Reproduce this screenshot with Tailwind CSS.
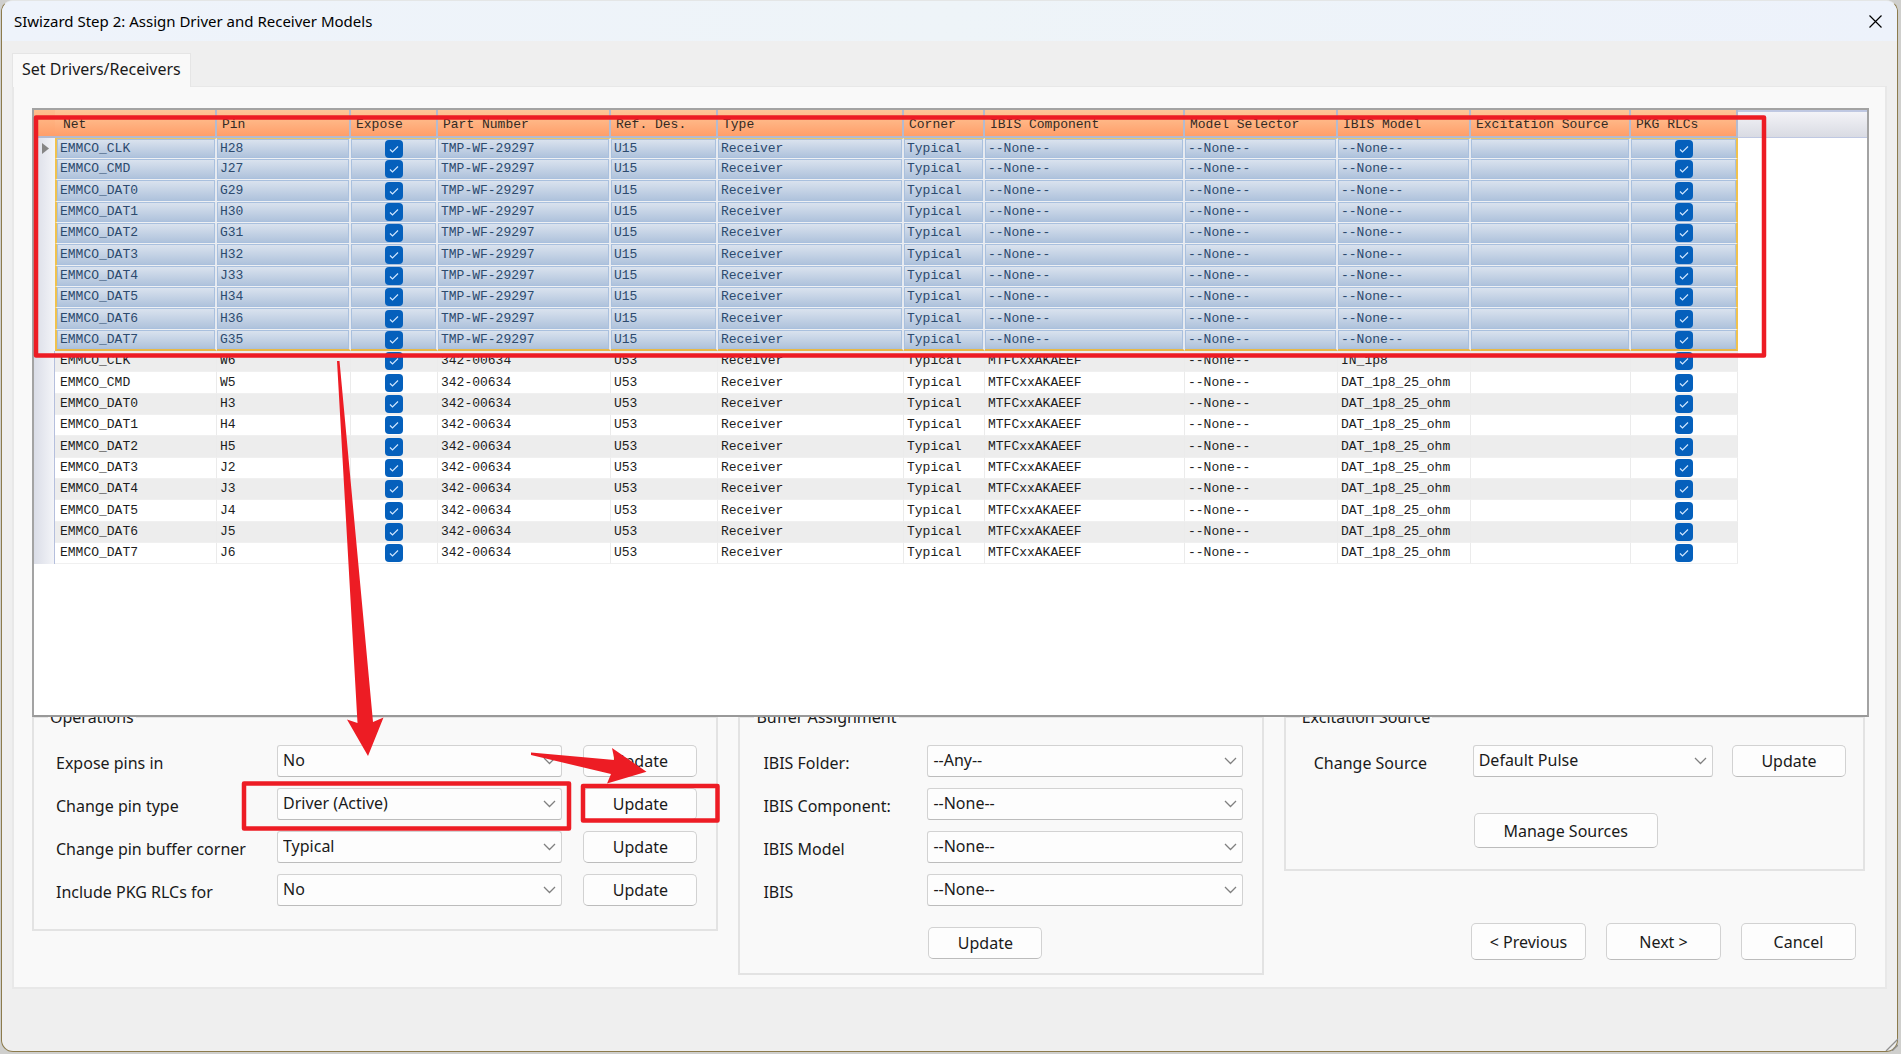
<!DOCTYPE html>
<html lang="en">
<head>
  <meta charset="UTF-8" />
  <meta name="viewport" content="width=device-width, initial-scale=1.0" />
  <title>SIwizard Step 2: Assign Driver and Receiver Models</title>
  <script src="https://cdn.jsdelivr.net/npm/@tailwindcss/browser@4"></script>
</head>
<body class="bg-[#cfcfcd] font-['Noto_Sans','Open_Sans',sans-serif] text-base leading-6 text-[#1a1a1a]">
  <div class="relative min-h-screen flex flex-col pl-px pr-[3px] pb-[2px]">

    <main class="flex-1 flex flex-col bg-[#efefef] border border-[#8c7b4c] border-t-[#e4e6e6] rounded-xl overflow-hidden">
      <header class="h-10 shrink-0 flex items-center justify-between pl-3 pr-[14px] bg-linear-to-r from-[#eef3fb] via-[#eef4f8] to-[#edf2fb]">
        <h1 class="text-[15px] text-black">SIwizard Step 2: Assign Driver and Receiver Models</h1>
        <button aria-label="Close" class="p-[1px]">
          <svg class="w-[13px] h-[13px]" viewBox="0 0 13 13" fill="none" stroke="#000" stroke-width="1.2"><path d="M.5.5l12 12M12.5.5l-12 12" /></svg>
        </button>
      </header>

      <!-- tab strip -->
      <div class="pt-3 pl-[10px] flex">
        <button class="relative z-10 h-[34px] -mb-px px-[9px] pb-1 bg-[#f9f9f9] border border-b-0 border-[#e5e5e5]">Set Drivers/Receivers</button>
      </div>

      <section class="mx-[10px] bg-[#f9f9f9] border-2 border-t border-[#e8e8e8] pt-[21px] pl-[18px] pr-4 pb-3">
        <div class="relative z-10 h-[609px] bg-white border-2 border-[#a3a3a3] border-b-[#999]">
          <table class="w-full table-fixed border-separate border-spacing-0 font-['Liberation_Mono',monospace] text-[13px] leading-4">
            <colgroup>
              <col class="w-[21px]" />
              <col class="w-[162px]" />
              <col class="w-[134px]" />
              <col class="w-[87px]" />
              <col class="w-[173px]" />
              <col class="w-[107px]" />
              <col class="w-[186px]" />
              <col class="w-[81px]" />
              <col class="w-[200px]" />
              <col class="w-[153px]" />
              <col class="w-[133px]" />
              <col class="w-[160px]" />
              <col class="w-[107px]" />
              <col />
            </colgroup>
            <thead>
              <tr id="head"></tr>
            </thead>
            <tbody id="pins"></tbody>
          </table>
        </div>

        <div class="-mt-3 mr-1 grid grid-cols-[686fr_525fr_581fr] gap-5 items-start">
          <fieldset class="border-2 border-[#e3e3e3] pb-[23px] pl-[22px] pr-[19px]">
            <legend class="-ml-[8px] px-[2px] h-6">Operations</legend>
            <div class="pt-4 flex flex-col gap-[11px]" id="operations"></div>
          </fieldset>

          <fieldset class="border-2 border-[#e3e3e3] pb-[14px] pl-[23px] pr-[19px]">
            <legend class="-ml-[9px] px-[2px] h-6">Buffer Assignment</legend>
            <div class="pt-4 flex flex-col gap-[11px]" id="buffer"></div>
            <div class="pl-[165px] pt-[21px]">
              <button class="w-[114px] h-8 bg-[#fdfdfd] border border-[#d2d2d2] border-b-[#bcbcbc] rounded-[5px]">Update</button>
            </div>
          </fieldset>

          <div>
            <fieldset class="border-2 border-[#e3e3e3] pb-[21px] pl-[28px] pr-[17px]">
              <legend class="-ml-[14px] px-[2px] h-6">Excitation Source</legend>
              <div class="pt-4 flex items-center">
                <label for="source" class="w-[159px] h-8 pt-[6px]">Change Source</label>
                <div class="relative flex-1">
                  <select id="source" class="appearance-none block w-full h-8 pl-[5px] pb-[2px] bg-[#fdfdfd] border border-[#d2d2d2] border-b-[#bcbcbc] rounded-[3px]"><option>Default Pulse</option></select>
                  <svg class="absolute right-[6px] top-3 w-[13px] h-2 pointer-events-none" viewBox="0 0 13 8" fill="none" stroke="#808080" stroke-width="1.3"><path d="M1 1l5.500 5.500L12 1" /></svg>
                </div>
                <button class="ml-[19px] w-[114px] h-8 bg-[#fdfdfd] border border-[#d2d2d2] border-b-[#bcbcbc] rounded-[5px]">Update</button>
              </div>
              <div class="pl-[160px] pt-9">
                <button class="w-[184px] h-[35px] bg-[#fdfdfd] border border-[#d2d2d2] border-b-[#bcbcbc] rounded-[5px]">Manage Sources</button>
              </div>
            </fieldset>
            <nav class="pt-[52px] pr-[9px] flex justify-end gap-5">
              <button class="w-[115px] h-[37px] bg-[#fdfdfd] border border-[#d2d2d2] border-b-[#bcbcbc] rounded-[5px]">&lt; Previous</button>
              <button class="w-[115px] h-[37px] bg-[#fdfdfd] border border-[#d2d2d2] border-b-[#bcbcbc] rounded-[5px]">Next &gt;</button>
              <button class="w-[115px] h-[37px] bg-[#fdfdfd] border border-[#d2d2d2] border-b-[#bcbcbc] rounded-[5px]">Cancel</button>
            </nav>
          </div>
        </div>
      </section>
    </main>

    <!-- resize grip -->
    <svg class="absolute right-[3px] bottom-[3px] w-[14px] h-[14px]" viewBox="0 0 14 14" fill="none" stroke="#8f8f8f" stroke-width="1.3"><path d="M2 14L14 2M8 14l6-6" /></svg>

    <!-- red markup -->
    <svg class="absolute left-0 top-0 w-full h-full z-20 pointer-events-none" fill="none">
      <g stroke="#ed1c24" stroke-width="4.500" stroke-linejoin="round">
        <rect x="36" y="117.500" width="1728" height="238" />
        <rect x="244" y="783.500" width="325" height="45" />
        <rect x="583" y="786" width="134.500" height="34.500" />
      </g>
      <g fill="#ed1c24">
        <path d="M337 361h2.500L373 722l10.500-4.500L368 756l-21-36.500 10.500 3.500z" />
        <path d="M531 752.500L614.500 760l-2.500-12 34.500 23.700L607 783.500l4-9.500L531 755z" />
      </g>
    </svg>
  </div>

  <script>
    const headers = ["Net", "Pin", "Expose", "Part Number", "Ref. Des.", "Type", "Corner", "IBIS Component", "Model Selector", "IBIS Model", "Excitation Source", "PKG RLCs"];
    const nets = ["EMMCO_CLK", "EMMCO_CMD", "EMMCO_DAT0", "EMMCO_DAT1", "EMMCO_DAT2", "EMMCO_DAT3", "EMMCO_DAT4", "EMMCO_DAT5", "EMMCO_DAT6", "EMMCO_DAT7"];
    const hostPins = ["H28", "J27", "G29", "H30", "G31", "H32", "J33", "H34", "H36", "G35"];
    const memPins = ["W6", "W5", "H3", "H4", "H5", "J2", "J3", "J4", "J5", "J6"];

    const rows = [
      ...nets.map((n, i) => [n, hostPins[i], true, "TMP-WF-29297", "U15", "Receiver", "Typical", "--None--", "--None--", "--None--", "", true]),
      ...nets.map((n, i) => [n, memPins[i], true, "342-00634", "U53", "Receiver", "Typical", "MTFCxxAKAEEF", "--None--", i ? "DAT_1p8_25_ohm" : "IN_1p8", "", true]),
    ];

    document.getElementById("head").innerHTML =
      `<th class="h-7 p-0 bg-linear-to-b from-[#ffbf8f] to-[#ff9e69] border-b-2 border-[#b3bad0]"></th>` +
      headers.map((h, i) => `<th scope="col" class="p-0 pt-[3px] ${i ? "pl-[5px]" : "pl-2"} text-left font-normal whitespace-nowrap text-[#332a24] bg-linear-to-b from-[#ffc698] to-[#ff9e69] border-r-2 border-b-2 border-[#b3bad0]">${h}</th>`).join("") +
      `<td class="p-0 bg-linear-to-b from-[#f3f3f7] to-[#d9dbe3] border-t-2 border-b border-[#bfc8e2]"></td>`;

    const check = (label) => `
      <label class="relative block w-[18px] h-[18px] mx-auto">
        <input type="checkbox" checked aria-label="${label}" class="appearance-none block w-[18px] h-[18px] rounded-[4px] bg-[#0560bc]" />
        <svg class="absolute inset-0 w-[18px] h-[18px] pointer-events-none" viewBox="0 0 18 18" fill="none" stroke="#cfe6ff" stroke-width="1.2"><path d="M5 9.500l2.500 2.500 5.500-5.500" /></svg>
      </label>`;

    document.getElementById("pins").innerHTML = rows.map((row, r) => {
      const selected = r < 10;
      const cells = row.map((v, c) => {
        let cls = selected
          ? "text-[#2c4a6e] bg-linear-to-b from-[#dce4ef] to-[#adc1db] inset-ring inset-ring-[#a9c0de]"
          : r % 2 ? "text-[#1c1c1c] bg-white" : "text-[#1c1c1c] bg-[#ededed]";
        if (selected && r === 0) cls += " border-t border-t-[#e9c56a]";
        cls += selected && r === 9 ? " border-b-2 border-b-[#e8b848]" : selected ? " border-b border-b-[#eef0f3]" : " border-b border-b-[#f0f0f0]";
        if (selected && c === 0) cls += " border-l-2 border-l-[#f0c24e]";
        cls += selected && c === 11 ? " border-r-2 border-r-[#f0c24e]" : selected ? " border-r-2 border-r-[#e6eaf0]" : " border-r border-r-[#ebebeb]";
        return v === true
          ? `<td class="p-0 ${cls}">${check(headers[c] + " " + row[0] + " " + row[1])}</td>`
          : `<td class="p-0 ${c === 0 && !selected ? "pl-[5px]" : "pl-[3px]"} whitespace-nowrap ${cls}">${v}</td>`;
      }).join("");
      const arrow = r === 0 ? `<svg class="ml-2 w-[7px] h-[11px]" viewBox="0 0 7 11"><path d="M0 0l7 5.500L0 11z" fill="#858585" /></svg>` : "";
      return `<tr class="h-[21px] nth-[3n]:h-[22px]"><td class="p-0 bg-linear-to-r from-[#dadde7] to-[#f3f4f8] ${selected ? "" : "border-r border-[#b5bfdd]"}">${arrow}</td>${cells}<td></td></tr>`;
    }).join("");

    const combo = (id, value) => `
      <div class="relative flex-1">
        <select id="${id}" class="appearance-none block w-full h-8 pl-[5px] pb-[2px] bg-[#fdfdfd] border border-[#d2d2d2] border-b-[#bcbcbc] rounded-[3px]"><option>${value}</option></select>
        <svg class="absolute right-[6px] top-3 w-[13px] h-2 pointer-events-none" viewBox="0 0 13 8" fill="none" stroke="#808080" stroke-width="1.3"><path d="M1 1l5.500 5.500L12 1" /></svg>
      </div>`;

    document.getElementById("operations").innerHTML = [
      ["Expose pins in", "No"],
      ["Change pin type", "Driver (Active)"],
      ["Change pin buffer corner", "Typical"],
      ["Include PKG RLCs for", "No"],
    ].map(([label, value], i) => `
      <div class="flex items-center">
        <label for="op${i}" class="w-[221px] h-8 pt-[6px]">${label}</label>
        ${combo("op" + i, value)}
        <button class="ml-[21px] w-[114px] h-8 bg-[#fdfdfd] border border-[#d2d2d2] border-b-[#bcbcbc] rounded-[5px]">Update</button>
      </div>`).join("");

    document.getElementById("buffer").innerHTML = [
      ["IBIS Folder:", "--Any--"],
      ["IBIS Component:", "--None--"],
      ["IBIS Model", "--None--"],
      ["IBIS", "--None--"],
    ].map(([label, value], i) => `
      <div class="flex items-center">
        <label for="buf${i}" class="w-[164px] h-8 pt-[6px]">${label}</label>
        ${combo("buf" + i, value)}
      </div>`).join("");
  </script>
</body>
</html>
